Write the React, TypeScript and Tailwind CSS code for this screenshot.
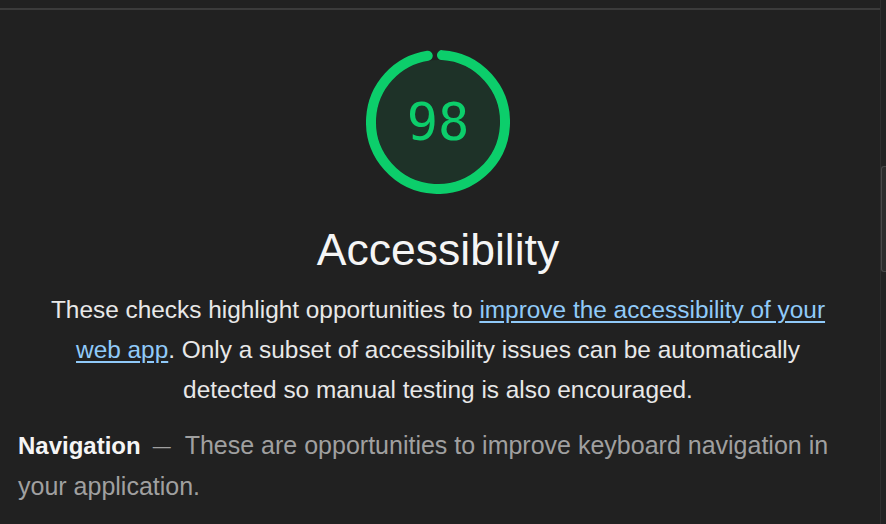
import React from 'react';

const Gauge: React.FC<{ score: number }> = ({ score }) => {
  return (
    <div className="relative mt-[40px] h-[144px] w-[144px]">
      <svg width="144" height="144" viewBox="0 0 144 144">
        <circle cx="72" cy="72" r="62" fill="#0cce6b" fillOpacity="0.1" />
        <circle
          cx="72"
          cy="72"
          r="67"
          fill="none"
          stroke="#0cce6b"
          strokeWidth="10"
          strokeLinecap="round"
          strokeDasharray="406 421"
          transform="rotate(-86.6 72 72)"
        />
      </svg>
      <div className="absolute inset-0 flex items-center justify-center font-['DejaVu_Sans_Mono',monospace] text-[52px] leading-none text-[#0cce6b]">
        {score}
      </div>
    </div>
  );
};

export default function App() {
  return (
    <div className="flex h-[524px] w-[886px] overflow-hidden bg-[#212121] font-['Liberation_Sans',Arial,sans-serif]">
      <main className="flex flex-1 flex-col">
        <div className="mt-[8px] h-[2px] bg-[#3b3b3b]" />
        <section className="flex flex-col items-center pl-[16px] pr-[20px]">
          <Gauge score={98} />
          <h1 className="mt-[28px] text-[44.5px] leading-[56px] text-[#f5f5f5]">Accessibility</h1>
          <p className="mt-[12px] w-[800px] text-center text-[24.4px] leading-[40px] text-[#e8e8e8]">
            These checks highlight opportunities to{' '}
            <a href="#" className="text-[#90caf9] underline underline-offset-[3px]">
              improve the accessibility of your web app
            </a>
            . Only a subset of accessibility issues can be automatically detected so manual testing is also encouraged.
          </p>
        </section>
        <div className="mt-[15px] pl-[18px] pr-[30px] text-[25px] leading-[41px]">
          <span className="text-[24px] font-bold text-[#f5f5f5]">Navigation</span>
          <span className="ml-[12px] mr-[14px] align-[2px] text-[18px] leading-none text-[#a0a0a0]">—</span>
          <span className="text-[#a0a0a0]">
            These are opportunities to improve keyboard navigation in your application.
          </span>
        </div>
      </main>
      <aside className="flex w-[6px] flex-col border-l border-[#2f2f2f] bg-[#232323]">
        <div className="mt-[166px] h-[106px] rounded-tl-[3px] rounded-bl-[3px] border border-r-0 border-[#484848] bg-[#2c2c2c]" />
      </aside>
    </div>
  );
}
